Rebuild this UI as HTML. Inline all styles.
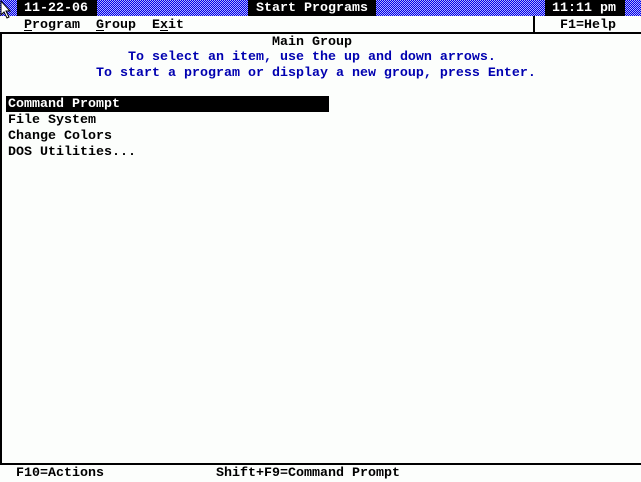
<!DOCTYPE html>
<html><head><style>
html,body{margin:0;padding:0;}
body{width:641px;height:480px;position:relative;overflow:hidden;background:#fcfefc;font-family:"Liberation Mono",monospace;font-size:13.33px;font-weight:bold;color:#000;}
.t{position:absolute;white-space:pre;line-height:16px;height:16px;margin-top:2px;}
.bar{position:absolute;left:0;top:0;width:641px;height:16px;background-color:#4040ff;background-image:repeating-conic-gradient(#0000e8 0 25%,#b0b0ff 0 50%);background-size:2px 2px;}
.blk{position:absolute;top:0;height:16px;background:#000;color:#fff;}
.w{color:#fff;}
.b{color:#0000b0;}
u{text-decoration:underline;text-underline-offset:2px;}
</style></head><body>
<div class="bar"></div>
<div class="blk" style="left:17px;width:80px"></div>
<div class="blk" style="left:248px;width:128px"></div>
<div class="blk" style="left:545px;width:80px"></div>
<div class="t w" style="left:24px;top:-1px">11-22-06</div>
<div class="t w" style="left:256px;top:-1px">Start Programs</div>
<div class="t w" style="left:552px;top:-1px">11:11 pm</div>
<svg style="position:absolute;left:0;top:0" width="12" height="20"><path d="M1 1 L1 15 L4 12 L7 18 L9 17 L6 11 L10 11 Z" fill="#fff" stroke="#000" stroke-width="1"/></svg>
<div class="t" style="left:24px;top:16px"><u>P</u>rogram</div>
<div class="t" style="left:96px;top:16px"><u>G</u>roup</div>
<div class="t" style="left:152px;top:16px">E<u>x</u>it</div>
<div style="position:absolute;left:533px;top:16px;width:2px;height:16px;background:#000"></div>
<div class="t" style="left:560px;top:16px">F1=Help</div>
<div style="position:absolute;left:0;top:32px;width:641px;height:2px;background:#000"></div>
<div style="position:absolute;left:0;top:32px;width:2px;height:432px;background:#000"></div>
<div style="position:absolute;left:0;top:463px;width:641px;height:2px;background:#000"></div>
<div class="t" style="left:272px;top:33px">Main Group</div>
<div class="t b" style="left:128px;top:48px">To select an item, use the up and down arrows.</div>
<div class="t b" style="left:96px;top:64px">To start a program or display a new group, press Enter.</div>
<div style="position:absolute;left:6px;top:96px;width:323px;height:16px;background:#000"></div>
<div class="t w" style="left:8px;top:95px">Command Prompt</div>
<div class="t" style="left:8px;top:111px">File System</div>
<div class="t" style="left:8px;top:127px">Change Colors</div>
<div class="t" style="left:8px;top:143px">DOS Utilities...</div>
<div class="t" style="left:16px;top:464px">F10=Actions</div>
<div class="t" style="left:216px;top:464px">Shift+F9=Command Prompt</div>
</body></html>
